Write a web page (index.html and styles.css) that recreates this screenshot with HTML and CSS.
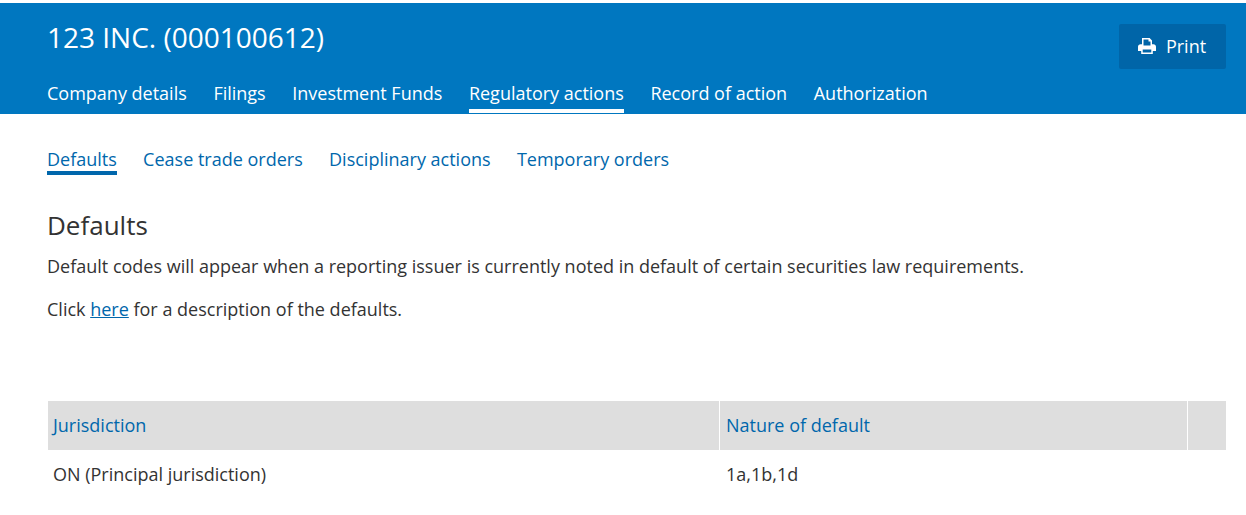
FILE: index.html
```html
<!DOCTYPE html>
<html lang="en">
<head>
    <meta charset="UTF-8">
    <title>123 INC. (000100612)</title>
    <link rel="stylesheet" href="styles.css">
</head>
<body>
    <!-- Company banner -->
    <header class="banner">
        <div class="banner-top">
            <h1>123 INC. (000100612)</h1>
            <button class="print-button">
                <svg class="print-icon" viewBox="0 0 18 16" width="18" height="16" aria-hidden="true">
                    <path fill="#fff" fill-rule="evenodd" d="M4 0h7.6L14 2.400V6.200h1.400C16.900 6.200 18 7.300 18 8.700V13h-3.200v3H3.200v-3H0V8.700C0 7.300 1.100 6.200 2.600 6.200H4V0zM5.500 1.400V7.400h7V3.400H10.500V1.400H5.500zM4.700 11.500V14.600h8.600V11.500H4.700z"/>
                </svg>
                Print
            </button>
        </div>
        <nav class="main-nav">
            <a href="#">Company details</a>
            <a href="#">Filings</a>
            <a href="#">Investment Funds</a>
            <a href="#" class="active">Regulatory actions</a>
            <a href="#">Record of action</a>
            <a href="#">Authorization</a>
        </nav>
    </header>

    <main class="content">
        <nav class="sub-nav">
            <a href="#" class="active">Defaults</a>
            <a href="#">Cease trade orders</a>
            <a href="#">Disciplinary actions</a>
            <a href="#">Temporary orders</a>
        </nav>

        <h2>Defaults</h2>
        <p>Default codes will appear when a reporting issuer is currently noted in default of certain securities law requirements.</p>
        <p>Click <a href="#" class="text-link">here</a> for a description of the defaults.</p>

        <table class="defaults-table">
            <colgroup>
                <col class="col-jurisdiction">
                <col class="col-nature">
                <col>
            </colgroup>
            <thead>
                <tr>
                    <th><a href="#">Jurisdiction</a></th>
                    <th><a href="#">Nature of default</a></th>
                    <th></th>
                </tr>
            </thead>
            <tbody>
                <tr>
                    <td>ON (Principal jurisdiction)</td>
                    <td>1a,1b,1d</td>
                    <td></td>
                </tr>
            </tbody>
        </table>
    </main>
</body>
</html>
```

FILE: styles.css
```css
* {
    margin: 0;
    padding: 0;
    box-sizing: border-box;
}

body {
    font-family: "Open Sans", sans-serif;
    font-size: 18px;
    color: #333;
    background: white;
    padding-top: 3px;
    overflow: hidden;
}

a {
    text-decoration: none;
}

.banner {
    height: 111px;
    background: #0077c0;
    padding: 0 20px 1px 47px;
    color: white;
    display: flex;
    flex-direction: column;
    justify-content: space-between;
}

.banner-top {
    display: flex;
    justify-content: space-between;
    align-items: flex-start;
}

.banner h1 {
    font-size: 28px;
    font-weight: 400;
    line-height: 36px;
    margin-top: 16px;
}

.print-button {
    display: flex;
    align-items: center;
    justify-content: center;
    gap: 10px;
    width: 107px;
    height: 45px;
    margin-top: 21px;
    padding: 0 1px 2px 0;
    font-family: inherit;
    font-size: 18px;
    color: white;
    background: #0065a8;
    border: none;
    border-radius: 2px;
}

.main-nav {
    display: flex;
    gap: 26.6px;
}

.main-nav a {
    color: white;
    font-size: 18px;
    line-height: 24px;
    padding-bottom: 4px;
    border-bottom: 4px solid transparent;
}

.main-nav a.active {
    border-bottom-color: white;
}

.content {
    padding: 0 20px 0 47px;
}

.sub-nav {
    display: flex;
    gap: 26.3px;
    margin-top: 34px;
}

.sub-nav a {
    color: #0067ac;
    font-size: 18px;
    line-height: 22px;
    padding-bottom: 1px;
    border-bottom: 4px solid transparent;
}

.sub-nav a.active {
    border-bottom-color: #0067ac;
}

.content h2 {
    font-size: 26px;
    font-weight: 400;
    line-height: 32px;
    margin-top: 34px;
}

.content p {
    line-height: 24px;
}

.content h2 + p {
    margin-top: 13px;
}

.content p + p {
    margin-top: 19px;
}

.text-link {
    color: #0067ac;
    text-decoration: underline;
}

.defaults-table {
    width: 1178px;
    margin: 80px 0 0 1px;
    border-collapse: separate;
    border-spacing: 0;
    table-layout: fixed;
}

.col-jurisdiction {
    width: 671px;
}

.col-nature {
    width: 468px;
}

.defaults-table th {
    height: 49px;
    padding: 0 6px 2px;
    background: #dedede;
    font-size: 18px;
    font-weight: 400;
    text-align: left;
    border-left: 1px solid white;
}

.defaults-table th:first-child {
    padding-left: 5px;
    border-left: none;
}

.defaults-table th a {
    color: #0067ac;
}

.defaults-table td {
    height: 49px;
    padding: 0 6px 2px;
    font-size: 18px;
    border-left: 1px solid transparent;
}

.defaults-table td:first-child {
    padding-left: 5px;
    border-left: none;
}
```
